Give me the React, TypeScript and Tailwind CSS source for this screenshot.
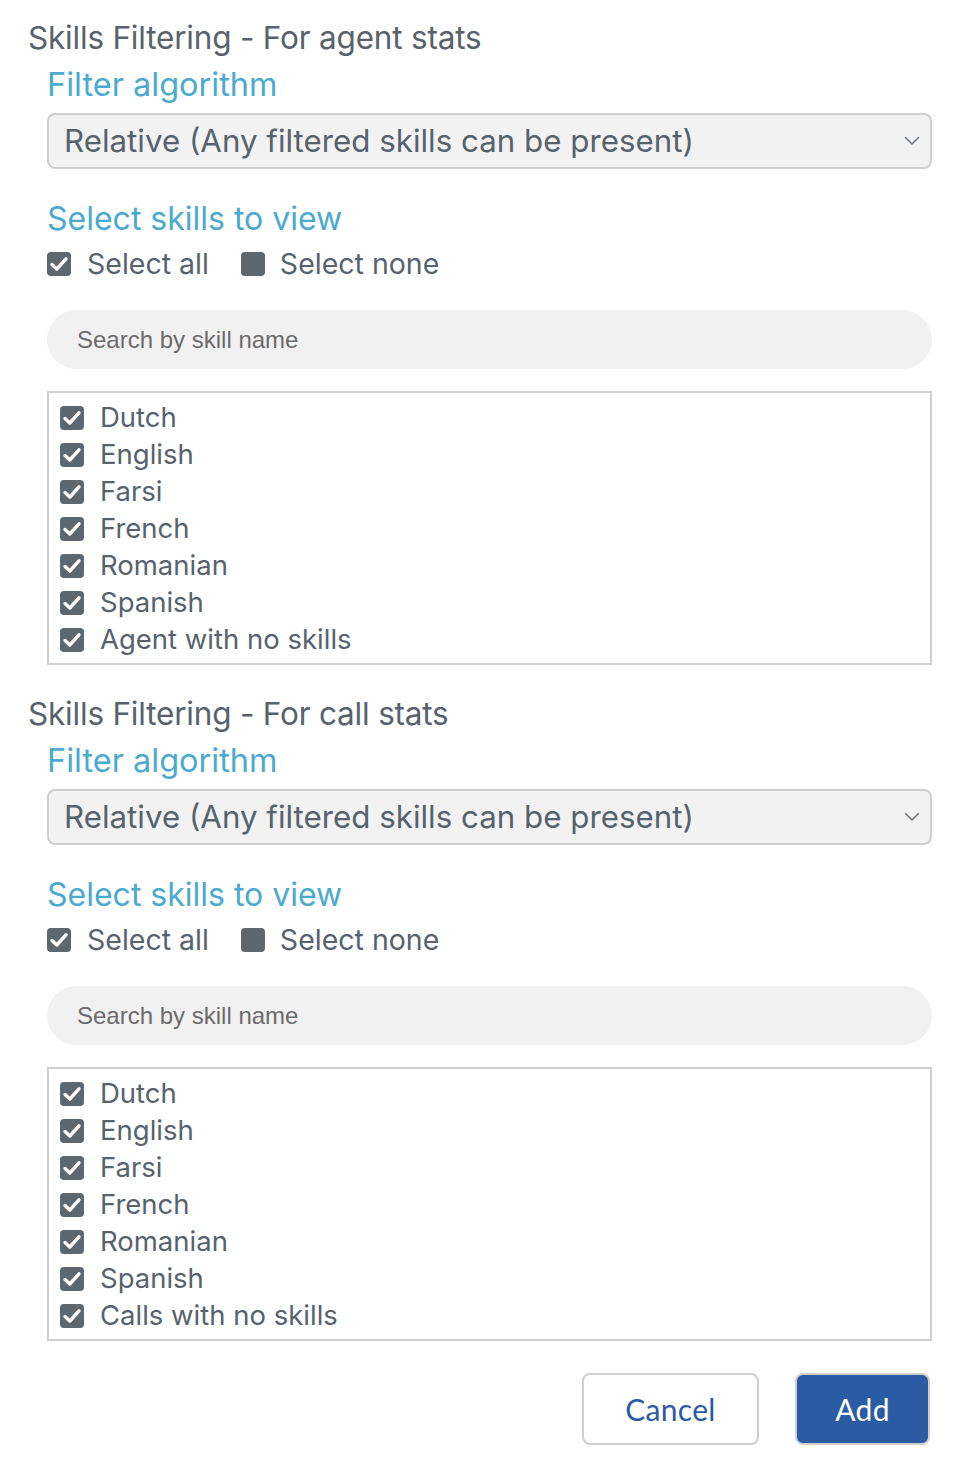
const font = { fontFamily: "Inter, 'Noto Sans', sans-serif" };

interface SectionProps {
  title: string;
  skills: string[];
}

function Box({ checked }: { checked: boolean }) {
  return (
    <svg width="24" height="24" viewBox="0 0 24 24" className="shrink-0">
      <rect width="24" height="24" rx="4" fill="#5d6770" />
      {checked && (
        <path
          d="M5 12.5 L9.8 17 L19 6.8"
          fill="none"
          stroke="white"
          strokeWidth="3.4"
          strokeLinecap="round"
          strokeLinejoin="round"
        />
      )}
    </svg>
  );
}

function Chevron() {
  return (
    <svg width="16" height="10" viewBox="0 0 16 10" className="text-[#6b747c]">
      <path d="M1.5 1.5 L8 8 L14.5 1.5" fill="none" stroke="currentColor" strokeWidth="1.5" strokeLinecap="round" />
    </svg>
  );
}

function Section({ title, skills }: SectionProps) {
  return (
    <div className="flex flex-col">
      <h2 className="text-[31.5px] leading-[36px] tracking-[-0.2px] text-[#57626b]">{title}</h2>
      <div className="flex flex-col pl-[19px]">
        <h3 className="mt-[11px] text-[32.5px] leading-[36px] text-[#4aaad0]">Filter algorithm</h3>
        <div className="mt-[10px] flex h-[56px] items-center justify-between rounded-[8px] border-2 border-[#cfcfcf] bg-[#f3f2f3] pl-[15px] pr-[10px]">
          <span className="text-[31.3px] text-[#56636d]">Relative (Any filtered skills can be present)</span>
          <Chevron />
        </div>
        <h3 className="mt-[32px] text-[32px] leading-[36px] text-[#4aaad0]">Select skills to view</h3>
        <div className="mt-[11px] flex h-[32px] items-center text-[28.5px] text-[#56636d]">
          <label className="flex items-center gap-[16px]">
            <Box checked />
            <span>Select all</span>
          </label>
          <label className="ml-[32px] flex items-center gap-[15px]">
            <Box checked={false} />
            <span>Select none</span>
          </label>
        </div>
        <div
          className="mt-[30px] flex h-[59px] items-center rounded-full bg-[#f2f1f2] pl-[30px] text-[24px] text-[#6b6b6b]"
          style={{ fontFamily: "'Liberation Sans', Arial, sans-serif" }}
        >
          Search by skill name
        </div>
        <div className="mt-[22px] flex flex-col border-2 border-[#cfcfcf] pb-[5px] pl-[11px] pt-[6px]">
          {skills.map((s) => (
            <label key={s} className="flex h-[37px] items-center gap-[16px] text-[27.5px] text-[#56636d]">
              <Box checked />
              <span>{s}</span>
            </label>
          ))}
        </div>
      </div>
    </div>
  );
}

const langs = ["Dutch", "English", "Farsi", "French", "Romanian", "Spanish"];

export default function App() {
  return (
    <div className="flex min-h-[1464px] flex-col bg-white pl-[28px] pr-[40px] pt-[20px]" style={font}>
      <Section title="Skills Filtering - For agent stats" skills={[...langs, "Agent with no skills"]} />
      <div className="mt-[31px]">
        <Section title="Skills Filtering - For call stats" skills={[...langs, "Calls with no skills"]} />
      </div>
      <div className="mt-[32px] flex justify-end gap-[36px] pr-[2px]" style={{ fontFamily: "Lato, sans-serif" }}>
        <button className="h-[72px] w-[177px] rounded-[8px] border-2 border-[#cfcfcf] bg-white text-[30px] tracking-[0.3px] text-[#2b5ca3]">
          Cancel
        </button>
        <button className="h-[72px] w-[135px] rounded-[8px] border-2 border-[#cfcfcf] bg-[#2b5ca3] text-[30px] tracking-[0.3px] text-white">
          Add
        </button>
      </div>
    </div>
  );
}
